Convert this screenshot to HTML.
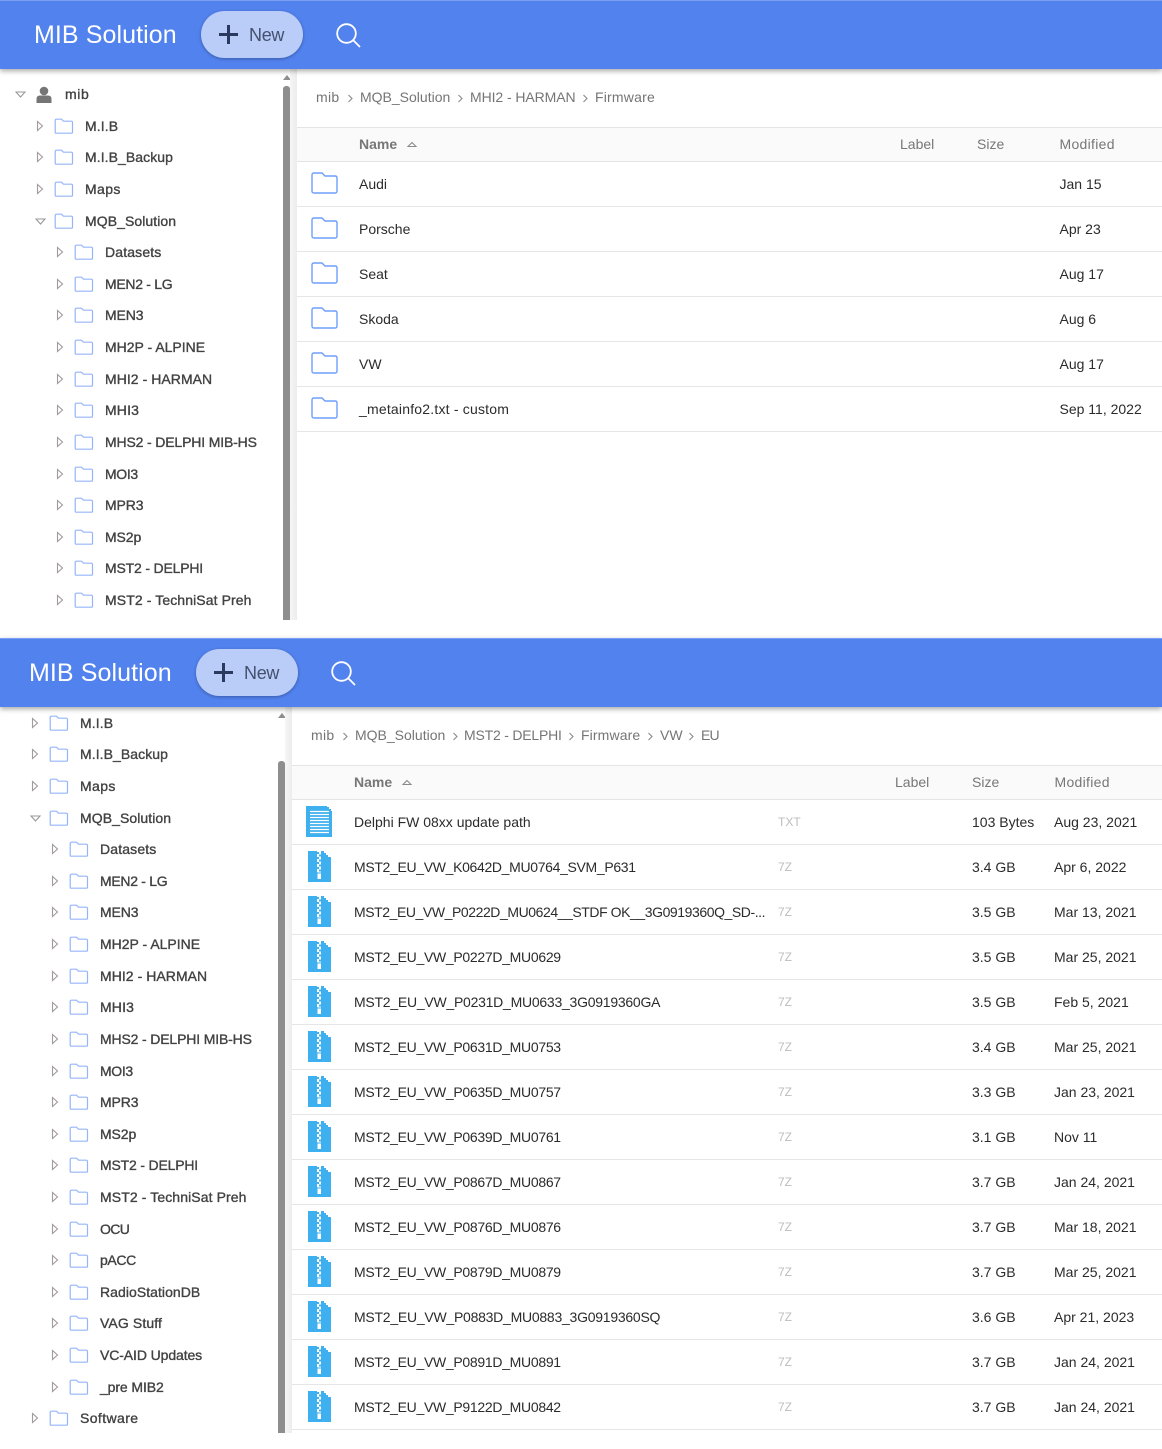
<!DOCTYPE html>
<html><head><meta charset="utf-8"><style>
html,body{margin:0;padding:0;background:#fff}
#p{position:relative;width:1162px;height:1449px;overflow:hidden;background:#fff;font-family:"Liberation Sans",sans-serif;font-size:14px;color:#2b2b2b}
#p div,#p svg,#p span{position:absolute}
.h{left:0;width:1162px;height:69px;background:#5282ee;box-shadow:0 2px 5px rgba(0,0,0,.35);z-index:5;border-top:1px solid #7b9ff2;box-sizing:border-box}
.ti{color:#fff;font-size:25px;line-height:30px;white-space:nowrap;letter-spacing:.08px}
.b{width:102px;height:47px;border-radius:24px;background:#b9cdf8;box-shadow:0 1px 3px rgba(0,0,0,.3);z-index:6}
.n{color:#44506e;font-size:18px;line-height:24px;z-index:7;letter-spacing:-.3px}
.r{height:20px;line-height:20px;white-space:nowrap;color:#424242;-webkit-text-stroke:.35px #424242;padding-left:49px;letter-spacing:-.1px}
.r svg{top:0;-webkit-text-stroke:0}
.sb{background:#8e8e8e;width:7px}
.sl{width:7px;background:linear-gradient(90deg,#f6f6f6,#ececec)}
.c{color:#757575;line-height:20px;white-space:nowrap}
.hd{left:0;height:33px;background:#fafafa;border-top:1px solid #e4e4e4;border-bottom:1px solid #e4e4e4}
.hr{color:#777;line-height:20px;white-space:nowrap}
.rw{height:44px;border-bottom:1px solid #e6e6e6;line-height:44px;color:#2b2b2b;white-space:nowrap}
.rw span{top:0}
.e{color:#bdbdbd;font-size:12px}
.u{letter-spacing:-.3px}
</style></head><body><div id="p">
<svg width="0" height="0" style="left:0;top:0"><defs>
<g id="ar"><path d="M1.5 5.5V14.5L6.5 10Z" fill="none" stroke="#a39a9a" stroke-width="1.1"/></g>
<g id="fo"><path d="M1.2 4.5Q1.2 3.2 2.5 3.2H7.5L9.5 5.2H17.2Q18.5 5.2 18.5 6.5V16.2Q18.5 17.2 17.2 17.2H2.5Q1.2 17.2 1.2 16.2Z" fill="none" stroke="#95b5fa" stroke-width="1.2"/></g>
<g id="fl"><path d="M1 3Q1 1 3 1H11L14 4H24Q26 4 26 6V19Q26 21 24 21H3Q1 21 1 19Z" fill="none" stroke="#6e9ffb" stroke-width="1.4"/></g>
<g id="doc"><path d="M0 0H21V1H23V3H25V5H26V31H0Z" fill="#3eb0ef"/><path d="M4 5.5H23M4 8.5H23M4 11.5H23M4 14.5H23M4 17.5H23M4 20.5H23M4 23.5H23M4 26.5H23" stroke="#fff" stroke-width="1.2"/></g>
<g id="zip"><path d="M0 0H16V2H18V4H20V6H23V31H0Z" fill="#3eb0ef"/><path d="M9 0H13V21H9Z" fill="#fff"/><path d="M9 1h2v2H9zM11 3.5h2v2h-2zM9 6h2v2H9zM11 8.5h2v2h-2zM9 11h2v2H9zM11 13.5h2v2h-2zM9 16h2v2H9zM11 18.5h2v2h-2z" fill="#3eb0ef"/><path d="M9.5 21H13V28H9.500Z" fill="#fff"/><path d="M9.5 21H13V23H9.500Z" fill="#9fd6f5"/></g>
<g id="chv"><path d="M1.5 1L5 4.5L1.5 8" fill="none" stroke="#8a8a8a" stroke-width="1.1"/></g>
<g id="srt"><path d="M1 5.5L5 1.500L9 5.500Z" fill="none" stroke="#8a8a8a" stroke-width="1.1"/></g>
<g id="up"><path d="M0 5L4 0L8 5Z" fill="#8e8e8e"/></g>
<g id="pl"><path d="M9.500 0V19M0 9.500H19" stroke="#2a3a5e" stroke-width="3" fill="none"/></g>
<g id="se"><circle cx="10.500" cy="10.500" r="9.300" fill="none" stroke="#fff" stroke-width="1.8"/><path d="M17 17L24 24" stroke="#fff" stroke-width="1.8" fill="none"/></g>
</defs></svg>

<!-- TOP -->
<div class="h" style="top:0"></div>
<div class="ti" style="left:34px;top:20px;z-index:7">MIB Solution</div>
<div class="b" style="left:201px;top:11px"></div>
<svg width="20" height="20" style="left:219px;top:25px;z-index:7"><use href="#pl"/></svg>
<div class="n" style="left:249px;top:23px">New</div>
<svg width="28" height="28" style="left:336px;top:23px;z-index:7"><use href="#se"/></svg>

<svg width="12" height="8" style="left:15px;top:91px"><path d="M1 1H10L5.500 6Z" fill="none" stroke="#9a9a9a" stroke-width="1.1"/></svg>
<svg width="16" height="18" style="left:36px;top:86px"><circle cx="8" cy="5" r="4.300" fill="#757575"/><path d="M0.500 17V13Q0.500 9.500 4 9.500H12Q15.500 9.500 15.500 13V17Z" fill="#757575"/></svg>
<div class="r" style="left:16px;top:84px;letter-spacing:.6px">mib</div>
<div class="r" style="left:36px;top:116px;letter-spacing:.1px"><svg width="20" height="20" style="left:0"><use href="#ar"/></svg><svg width="20" height="20" style="left:18px"><use href="#fo"/></svg>M.I.B</div>
<div class="r" style="left:36px;top:147px;letter-spacing:.07px"><svg width="20" height="20" style="left:0"><use href="#ar"/></svg><svg width="20" height="20" style="left:18px"><use href="#fo"/></svg>M.I.B_Backup</div>
<div class="r" style="left:36px;top:179px;letter-spacing:.4px"><svg width="20" height="20" style="left:0"><use href="#ar"/></svg><svg width="20" height="20" style="left:18px"><use href="#fo"/></svg>Maps</div>
<svg width="12" height="8" style="left:35px;top:218px"><path d="M1 1H10L5.500 6Z" fill="none" stroke="#9a9a9a" stroke-width="1.1"/></svg>
<div class="r" style="left:36px;top:211px;letter-spacing:.07px"><svg width="20" height="20" style="left:18px"><use href="#fo"/></svg>MQB_Solution</div>
<div class="r" style="left:56px;top:242px;letter-spacing:.15px"><svg width="20" height="20" style="left:0"><use href="#ar"/></svg><svg width="20" height="20" style="left:18px"><use href="#fo"/></svg>Datasets</div>
<div class="r" style="left:56px;top:274px;letter-spacing:-.3px"><svg width="20" height="20" style="left:0"><use href="#ar"/></svg><svg width="20" height="20" style="left:18px"><use href="#fo"/></svg>MEN2 - LG</div>
<div class="r" style="left:56px;top:305px"><svg width="20" height="20" style="left:0"><use href="#ar"/></svg><svg width="20" height="20" style="left:18px"><use href="#fo"/></svg>MEN3</div>
<div class="r" style="left:56px;top:337px;letter-spacing:0"><svg width="20" height="20" style="left:0"><use href="#ar"/></svg><svg width="20" height="20" style="left:18px"><use href="#fo"/></svg>MH2P - ALPINE</div>
<div class="r" style="left:56px;top:369px;letter-spacing:.05px"><svg width="20" height="20" style="left:0"><use href="#ar"/></svg><svg width="20" height="20" style="left:18px"><use href="#fo"/></svg>MHI2 - HARMAN</div>
<div class="r" style="left:56px;top:400px;letter-spacing:.15px"><svg width="20" height="20" style="left:0"><use href="#ar"/></svg><svg width="20" height="20" style="left:18px"><use href="#fo"/></svg>MHI3</div>
<div class="r" style="left:56px;top:432px;letter-spacing:-.15px"><svg width="20" height="20" style="left:0"><use href="#ar"/></svg><svg width="20" height="20" style="left:18px"><use href="#fo"/></svg>MHS2 - DELPHI MIB-HS</div>
<div class="r" style="left:56px;top:464px;letter-spacing:-.35px"><svg width="20" height="20" style="left:0"><use href="#ar"/></svg><svg width="20" height="20" style="left:18px"><use href="#fo"/></svg>MOI3</div>
<div class="r" style="left:56px;top:495px"><svg width="20" height="20" style="left:0"><use href="#ar"/></svg><svg width="20" height="20" style="left:18px"><use href="#fo"/></svg>MPR3</div>
<div class="r" style="left:56px;top:527px"><svg width="20" height="20" style="left:0"><use href="#ar"/></svg><svg width="20" height="20" style="left:18px"><use href="#fo"/></svg>MS2p</div>
<div class="r" style="left:56px;top:558px;letter-spacing:-.18px"><svg width="20" height="20" style="left:0"><use href="#ar"/></svg><svg width="20" height="20" style="left:18px"><use href="#fo"/></svg>MST2 - DELPHI</div>
<div class="r" style="left:56px;top:590px;letter-spacing:.1px"><svg width="20" height="20" style="left:0"><use href="#ar"/></svg><svg width="20" height="20" style="left:18px"><use href="#fo"/></svg>MST2 - TechniSat Preh</div>

<svg width="8" height="5" style="left:283px;top:75px"><use href="#up"/></svg>
<div class="sb" style="left:283px;top:86px;height:534px;border-radius:3px 3px 0 0"></div>
<div class="sl" style="left:290px;top:69px;height:551px"></div>

<div class="c" style="left:316px;top:87px;letter-spacing:.3px">mib</div>
<svg width="7" height="10" style="left:347px;top:94px"><use href="#chv"/></svg>
<div class="c" style="left:360px;top:87px">MQB_Solution</div>
<svg width="7" height="10" style="left:457px;top:94px"><use href="#chv"/></svg>
<div class="c" style="left:470px;top:87px;letter-spacing:-.08px">MHI2 - HARMAN</div>
<svg width="7" height="10" style="left:582px;top:94px"><use href="#chv"/></svg>
<div class="c" style="left:595px;top:87px;letter-spacing:.2px">Firmware</div>

<div class="hd" style="left:297px;top:127px;width:865px"></div>
<div class="hr" style="left:359px;top:134px;font-weight:bold">Name</div>
<svg width="10" height="7" style="left:407px;top:141px"><use href="#srt"/></svg>
<div class="hr" style="left:900px;top:134px">Label</div>
<div class="hr" style="left:977px;top:134px">Size</div>
<div class="hr" style="left:1059.500px;top:134px;letter-spacing:.3px">Modified</div>

<div class="rw" style="left:297px;top:162px;width:865px"><svg width="28" height="23" style="left:14px;top:10px"><use href="#fl"/></svg><span style="left:62px">Audi</span><span style="left:762.500px">Jan 15</span></div>
<div class="rw" style="left:297px;top:207px;width:865px"><svg width="28" height="23" style="left:14px;top:10px"><use href="#fl"/></svg><span style="left:62px">Porsche</span><span style="left:762.500px">Apr 23</span></div>
<div class="rw" style="left:297px;top:252px;width:865px"><svg width="28" height="23" style="left:14px;top:10px"><use href="#fl"/></svg><span style="left:62px">Seat</span><span style="left:762.500px">Aug 17</span></div>
<div class="rw" style="left:297px;top:297px;width:865px"><svg width="28" height="23" style="left:14px;top:10px"><use href="#fl"/></svg><span style="left:62px">Skoda</span><span style="left:762.500px">Aug 6</span></div>
<div class="rw" style="left:297px;top:342px;width:865px"><svg width="28" height="23" style="left:14px;top:10px"><use href="#fl"/></svg><span style="left:62px">VW</span><span style="left:762.500px">Aug 17</span></div>
<div class="rw" style="left:297px;top:387px;width:865px"><svg width="28" height="23" style="left:14px;top:10px"><use href="#fl"/></svg><span style="left:62px;letter-spacing:.2px">_metainfo2.txt - custom</span><span style="left:762.500px">Sep 11, 2022</span></div>

<!-- BOTTOM -->
<div class="h" style="top:638px"></div>
<div class="ti" style="left:29px;top:658px;z-index:7">MIB Solution</div>
<div class="b" style="left:196px;top:649px"></div>
<svg width="20" height="20" style="left:214px;top:663px;z-index:7"><use href="#pl"/></svg>
<div class="n" style="left:244px;top:661px">New</div>
<svg width="28" height="28" style="left:331px;top:661px;z-index:7"><use href="#se"/></svg>

<div class="r" style="left:31px;top:713px;letter-spacing:.1px"><svg width="20" height="20" style="left:0"><use href="#ar"/></svg><svg width="20" height="20" style="left:18px"><use href="#fo"/></svg>M.I.B</div>
<div class="r" style="left:31px;top:744px;letter-spacing:.07px"><svg width="20" height="20" style="left:0"><use href="#ar"/></svg><svg width="20" height="20" style="left:18px"><use href="#fo"/></svg>M.I.B_Backup</div>
<div class="r" style="left:31px;top:776px;letter-spacing:.4px"><svg width="20" height="20" style="left:0"><use href="#ar"/></svg><svg width="20" height="20" style="left:18px"><use href="#fo"/></svg>Maps</div>
<svg width="12" height="8" style="left:30px;top:815px"><path d="M1 1H10L5.500 6Z" fill="none" stroke="#9a9a9a" stroke-width="1.1"/></svg>
<div class="r" style="left:31px;top:808px;letter-spacing:.07px"><svg width="20" height="20" style="left:18px"><use href="#fo"/></svg>MQB_Solution</div>
<div class="r" style="left:51px;top:839px;letter-spacing:.15px"><svg width="20" height="20" style="left:0"><use href="#ar"/></svg><svg width="20" height="20" style="left:18px"><use href="#fo"/></svg>Datasets</div>
<div class="r" style="left:51px;top:871px;letter-spacing:-.3px"><svg width="20" height="20" style="left:0"><use href="#ar"/></svg><svg width="20" height="20" style="left:18px"><use href="#fo"/></svg>MEN2 - LG</div>
<div class="r" style="left:51px;top:902px"><svg width="20" height="20" style="left:0"><use href="#ar"/></svg><svg width="20" height="20" style="left:18px"><use href="#fo"/></svg>MEN3</div>
<div class="r" style="left:51px;top:934px;letter-spacing:0"><svg width="20" height="20" style="left:0"><use href="#ar"/></svg><svg width="20" height="20" style="left:18px"><use href="#fo"/></svg>MH2P - ALPINE</div>
<div class="r" style="left:51px;top:966px;letter-spacing:.05px"><svg width="20" height="20" style="left:0"><use href="#ar"/></svg><svg width="20" height="20" style="left:18px"><use href="#fo"/></svg>MHI2 - HARMAN</div>
<div class="r" style="left:51px;top:997px;letter-spacing:.15px"><svg width="20" height="20" style="left:0"><use href="#ar"/></svg><svg width="20" height="20" style="left:18px"><use href="#fo"/></svg>MHI3</div>
<div class="r" style="left:51px;top:1029px;letter-spacing:-.15px"><svg width="20" height="20" style="left:0"><use href="#ar"/></svg><svg width="20" height="20" style="left:18px"><use href="#fo"/></svg>MHS2 - DELPHI MIB-HS</div>
<div class="r" style="left:51px;top:1061px;letter-spacing:-.35px"><svg width="20" height="20" style="left:0"><use href="#ar"/></svg><svg width="20" height="20" style="left:18px"><use href="#fo"/></svg>MOI3</div>
<div class="r" style="left:51px;top:1092px"><svg width="20" height="20" style="left:0"><use href="#ar"/></svg><svg width="20" height="20" style="left:18px"><use href="#fo"/></svg>MPR3</div>
<div class="r" style="left:51px;top:1124px"><svg width="20" height="20" style="left:0"><use href="#ar"/></svg><svg width="20" height="20" style="left:18px"><use href="#fo"/></svg>MS2p</div>
<div class="r" style="left:51px;top:1155px;letter-spacing:-.18px"><svg width="20" height="20" style="left:0"><use href="#ar"/></svg><svg width="20" height="20" style="left:18px"><use href="#fo"/></svg>MST2 - DELPHI</div>
<div class="r" style="left:51px;top:1187px;letter-spacing:.1px"><svg width="20" height="20" style="left:0"><use href="#ar"/></svg><svg width="20" height="20" style="left:18px"><use href="#fo"/></svg>MST2 - TechniSat Preh</div>
<div class="r" style="left:51px;top:1219px;letter-spacing:-.6px"><svg width="20" height="20" style="left:0"><use href="#ar"/></svg><svg width="20" height="20" style="left:18px"><use href="#fo"/></svg>OCU</div>
<div class="r" style="left:51px;top:1250px;letter-spacing:-.35px"><svg width="20" height="20" style="left:0"><use href="#ar"/></svg><svg width="20" height="20" style="left:18px"><use href="#fo"/></svg>pACC</div>
<div class="r" style="left:51px;top:1282px;letter-spacing:.05px"><svg width="20" height="20" style="left:0"><use href="#ar"/></svg><svg width="20" height="20" style="left:18px"><use href="#fo"/></svg>RadioStationDB</div>
<div class="r" style="left:51px;top:1313px;letter-spacing:.12px"><svg width="20" height="20" style="left:0"><use href="#ar"/></svg><svg width="20" height="20" style="left:18px"><use href="#fo"/></svg>VAG Stuff</div>
<div class="r" style="left:51px;top:1345px"><svg width="20" height="20" style="left:0"><use href="#ar"/></svg><svg width="20" height="20" style="left:18px"><use href="#fo"/></svg>VC-AID Updates</div>
<div class="r" style="left:51px;top:1377px"><svg width="20" height="20" style="left:0"><use href="#ar"/></svg><svg width="20" height="20" style="left:18px"><use href="#fo"/></svg>_pre MIB2</div>
<div class="r" style="left:31px;top:1408px;letter-spacing:.4px"><svg width="20" height="20" style="left:0"><use href="#ar"/></svg><svg width="20" height="20" style="left:18px"><use href="#fo"/></svg>Software</div>

<svg width="8" height="5" style="left:278px;top:713px"><use href="#up"/></svg>
<div class="sb" style="left:278px;top:761px;height:672px;border-radius:3px 3px 0 0"></div>
<div class="sl" style="left:285px;top:707px;height:726px"></div>

<div class="c" style="left:311px;top:725px;letter-spacing:.3px">mib</div>
<svg width="7" height="10" style="left:342px;top:732px"><use href="#chv"/></svg>
<div class="c" style="left:355px;top:725px">MQB_Solution</div>
<svg width="7" height="10" style="left:452px;top:732px"><use href="#chv"/></svg>
<div class="c" style="left:464px;top:725px;letter-spacing:-.2px">MST2 - DELPHI</div>
<svg width="7" height="10" style="left:568px;top:732px"><use href="#chv"/></svg>
<div class="c" style="left:581px;top:725px;letter-spacing:.12px">Firmware</div>
<svg width="7" height="10" style="left:647px;top:732px"><use href="#chv"/></svg>
<div class="c" style="left:660px;top:725px">VW</div>
<svg width="7" height="10" style="left:688px;top:732px"><use href="#chv"/></svg>
<div class="c" style="left:701px;top:725px;letter-spacing:-.8px">EU</div>

<div class="hd" style="left:292px;top:765px;width:870px"></div>
<div class="hr" style="left:354px;top:772px;font-weight:bold">Name</div>
<svg width="10" height="7" style="left:402px;top:779px"><use href="#srt"/></svg>
<div class="hr" style="left:895px;top:772px">Label</div>
<div class="hr" style="left:972px;top:772px">Size</div>
<div class="hr" style="left:1054.500px;top:772px;letter-spacing:.3px">Modified</div>

<div class="rw" style="left:292px;top:800px;width:870px"><svg width="26" height="31" style="left:14px;top:6px"><use href="#doc"/></svg><span style="left:62px">Delphi FW 08xx update path</span><span class="e" style="left:486px">TXT</span><span style="left:680px">103 Bytes</span><span style="left:762px">Aug 23, 2021</span></div>
<div class="rw" style="left:292px;top:845px;width:870px"><svg width="24" height="31" style="left:16px;top:6px"><use href="#zip"/></svg><span style="left:62px;letter-spacing:-.33px">MST2_EU_VW_K0642D_MU0764_SVM_P631</span><span class="e" style="left:486px">7Z</span><span style="left:680px">3.4 GB</span><span style="left:762px">Apr 6, 2022</span></div>
<div class="rw" style="left:292px;top:890px;width:870px"><svg width="24" height="31" style="left:16px;top:6px"><use href="#zip"/></svg><span style="left:62px;letter-spacing:-.43px">MST2_EU_VW_P0222D_MU0624__STDF OK__3G0919360Q_SD-...</span><span class="e" style="left:486px">7Z</span><span style="left:680px">3.5 GB</span><span style="left:762px">Mar 13, 2021</span></div>
<div class="rw" style="left:292px;top:935px;width:870px"><svg width="24" height="31" style="left:16px;top:6px"><use href="#zip"/></svg><span class="u" style="left:62px">MST2_EU_VW_P0227D_MU0629</span><span class="e" style="left:486px">7Z</span><span style="left:680px">3.5 GB</span><span style="left:762px">Mar 25, 2021</span></div>
<div class="rw" style="left:292px;top:980px;width:870px"><svg width="24" height="31" style="left:16px;top:6px"><use href="#zip"/></svg><span style="left:62px;letter-spacing:-.25px">MST2_EU_VW_P0231D_MU0633_3G0919360GA</span><span class="e" style="left:486px">7Z</span><span style="left:680px">3.5 GB</span><span style="left:762px">Feb 5, 2021</span></div>
<div class="rw" style="left:292px;top:1025px;width:870px"><svg width="24" height="31" style="left:16px;top:6px"><use href="#zip"/></svg><span class="u" style="left:62px">MST2_EU_VW_P0631D_MU0753</span><span class="e" style="left:486px">7Z</span><span style="left:680px">3.4 GB</span><span style="left:762px">Mar 25, 2021</span></div>
<div class="rw" style="left:292px;top:1070px;width:870px"><svg width="24" height="31" style="left:16px;top:6px"><use href="#zip"/></svg><span class="u" style="left:62px">MST2_EU_VW_P0635D_MU0757</span><span class="e" style="left:486px">7Z</span><span style="left:680px">3.3 GB</span><span style="left:762px">Jan 23, 2021</span></div>
<div class="rw" style="left:292px;top:1115px;width:870px"><svg width="24" height="31" style="left:16px;top:6px"><use href="#zip"/></svg><span class="u" style="left:62px">MST2_EU_VW_P0639D_MU0761</span><span class="e" style="left:486px">7Z</span><span style="left:680px">3.1 GB</span><span style="left:762px">Nov 11</span></div>
<div class="rw" style="left:292px;top:1160px;width:870px"><svg width="24" height="31" style="left:16px;top:6px"><use href="#zip"/></svg><span class="u" style="left:62px">MST2_EU_VW_P0867D_MU0867</span><span class="e" style="left:486px">7Z</span><span style="left:680px">3.7 GB</span><span style="left:762px">Jan 24, 2021</span></div>
<div class="rw" style="left:292px;top:1205px;width:870px"><svg width="24" height="31" style="left:16px;top:6px"><use href="#zip"/></svg><span class="u" style="left:62px">MST2_EU_VW_P0876D_MU0876</span><span class="e" style="left:486px">7Z</span><span style="left:680px">3.7 GB</span><span style="left:762px">Mar 18, 2021</span></div>
<div class="rw" style="left:292px;top:1250px;width:870px"><svg width="24" height="31" style="left:16px;top:6px"><use href="#zip"/></svg><span class="u" style="left:62px">MST2_EU_VW_P0879D_MU0879</span><span class="e" style="left:486px">7Z</span><span style="left:680px">3.7 GB</span><span style="left:762px">Mar 25, 2021</span></div>
<div class="rw" style="left:292px;top:1295px;width:870px"><svg width="24" height="31" style="left:16px;top:6px"><use href="#zip"/></svg><span style="left:62px;letter-spacing:-.25px">MST2_EU_VW_P0883D_MU0883_3G0919360SQ</span><span class="e" style="left:486px">7Z</span><span style="left:680px">3.6 GB</span><span style="left:762px">Apr 21, 2023</span></div>
<div class="rw" style="left:292px;top:1340px;width:870px"><svg width="24" height="31" style="left:16px;top:6px"><use href="#zip"/></svg><span class="u" style="left:62px">MST2_EU_VW_P0891D_MU0891</span><span class="e" style="left:486px">7Z</span><span style="left:680px">3.7 GB</span><span style="left:762px">Jan 24, 2021</span></div>
<div class="rw" style="left:292px;top:1385px;width:870px"><svg width="24" height="31" style="left:16px;top:6px"><use href="#zip"/></svg><span class="u" style="left:62px">MST2_EU_VW_P9122D_MU0842</span><span class="e" style="left:486px">7Z</span><span style="left:680px">3.7 GB</span><span style="left:762px">Jan 24, 2021</span></div>
</div></body></html>
